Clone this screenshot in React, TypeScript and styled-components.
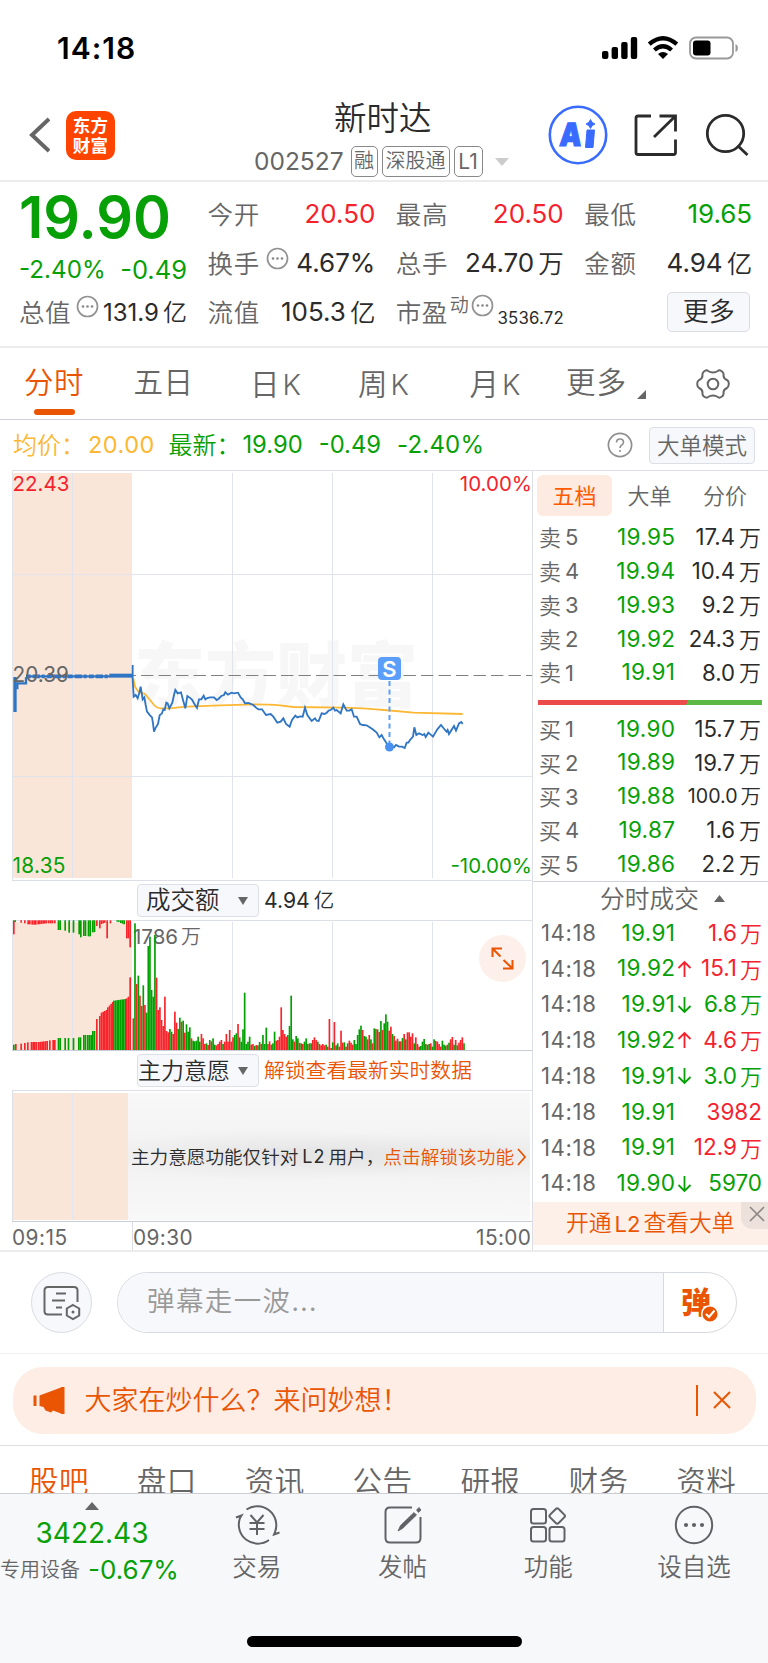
import React from 'react';
import styled, { createGlobalStyle } from 'styled-components';

const RED = '#f5222d';
const GREEN = '#07a007';
const ORANGE = '#ea5504';
const GREY = '#666';
const INK = '#2b2b2b';
const LINE = '#dcdfe6';

const Global = createGlobalStyle`
  * { box-sizing: border-box; }
  html, body { margin: 0; background: #fff; }
  body {
    width: 768px; height: 1663px; overflow: hidden;
    font-family: Inter, "Noto Sans CJK SC", sans-serif;
    line-height: 1; color: ${INK};
  }
`;

const Screen = styled.div`
  width: 768px; height: 1663px; display: flex; flex-direction: column; overflow: hidden; background: #fff;
`;

/* Text primitives */
const Cn = styled.span<{ $size: number; $color?: string; $gap?: number; $weight?: number }>`
  display: inline-block;
  padding-bottom: 0.11em;
  font-family: "Noto Sans CJK SC", sans-serif;
  font-weight: ${p => p.$weight ?? 350};
  font-size: ${p => p.$size}px;
  line-height: 1;
  letter-spacing: ${p => p.$gap ?? 0}px;
  color: ${p => p.$color ?? GREY};
  white-space: nowrap;
`;
const Num = styled.span<{ $size: number; $color?: string; $gap?: number; $weight?: number }>`
  font-size: ${p => p.$size}px;
  line-height: 1;
  font-weight: ${p => p.$weight ?? 400};
  letter-spacing: ${p => p.$gap ?? 0}px;
  margin-right: ${p => -(p.$gap ?? 0)}px;
  color: ${p => p.$color ?? INK};
  white-space: nowrap;
`;
const AmountBox = styled.span<{ $space: number }>`
  display: inline-flex; align-items: center; gap: ${p => p.$space}px;
`;
function Amount({ value, size, color, gap = 0, unitSize, space = 4 }: { value: string; size: number; color?: string; gap?: number; unitSize?: number; space?: number }) {
  const unit = /[万亿]$/.test(value) ? value.slice(-1) : '';
  const number = unit ? value.slice(0, -1) : value;
  return (
    <AmountBox $space={space}>
      <Num $size={size} $color={color} $gap={gap}>{number}</Num>
      {unit && <Cn $size={unitSize ?? size - 1} $color={color ?? INK}>{unit}</Cn>}
    </AmountBox>
  );
}

/* Status bar */
const StatusBar = styled.div`
  height: 95px; padding: 0 29px 0 57px; display: flex; align-items: center; justify-content: space-between;
`;
const StatusIcons = styled.svg`display: block;`;

/* Header */
const Header = styled.header`
  height: 87px; border-bottom: 2px solid #ececee; padding: 0 18px 0 28px;
  display: grid; grid-template-columns: 226px 1fr 218px;
`;
const HeaderLeft = styled.div`display: flex; align-items: center; gap: 16px; padding-bottom: 5px;`;
const Logo = styled.div`
  width: 49px; height: 49px; border-radius: 10px; background: #ff4400; color: #fff;
  display: flex; flex-direction: column; align-items: center; justify-content: center; gap: 1px; padding-top: 1px;
`;
const TitleBlock = styled.div`display: flex; flex-direction: column; align-items: flex-start;`;
const TitleRow = styled.div`height: 46px; padding-left: 80px; display: flex; align-items: center;`;
const CodeRow = styled.div`height: 31px; margin-top: 5px; display: flex; align-items: center;`;
const Tag = styled.span<{ $w: number }>`
  width: ${p => p.$w}px; height: 31px; border: 1px solid #888; border-radius: 5px; margin-right: 4px; flex: none;
  display: inline-flex; align-items: center; justify-content: center;
`;
const HeaderRight = styled.div`display: flex; justify-content: flex-end; align-items: center; padding-bottom: 5px;`;

/* Quote */
const Quote = styled.section`
  height: 166px; padding: 7.5px 0 0 19px; border-bottom: 2px solid #ececee;
  display: grid; grid-template-columns: 168px repeat(3, 168px); column-gap: 20.4px;
`;
const QuoteCol = styled.div`display: flex; flex-direction: column;`;
const QuoteCell = styled.div<{ $h?: number }>`
  height: ${p => p.$h ?? 49}px; display: flex; align-items: center; justify-content: space-between;
`;
const LabelGroup = styled.span<{ $space?: number }>`display: inline-flex; align-items: center; gap: ${p => p.$space ?? 6}px;`;
const Raised = styled.span<{ $up: number }>`display: inline-flex; margin-bottom: ${p => p.$up}px;`;
const MoreButton = styled.button`
  width: 83px; height: 40px; margin: 4px 2px 0 auto; padding: 0; border: 1px solid #d9dce3; border-radius: 5px; background: #f7f8fb;
  display: flex; align-items: center; justify-content: center;
`;

/* Period tabs */
const Tabs = styled.nav`
  height: 72px; border-bottom: 1px solid #cfd3d9; padding-bottom: 1px;
  display: grid; grid-template-columns: 108px 111px 113px 103px 120px 102px 1fr;
`;
const Tab = styled.div`
  display: flex; flex-direction: column; align-items: center; justify-content: flex-start; padding-top: 20px;
`;
const TabText = styled.span`display: inline-flex; align-items: flex-end; gap: 10px; height: 31px;`;
const LetterK = styled.span`display: inline-flex; padding-top: 1px;`;
const Underline = styled.i`width: 41px; height: 6px; border-radius: 3px; background: ${ORANGE}; margin: 10px 0 0 34px; align-self: flex-start;`;

/* Summary line */
const Summary = styled.div`
  height: 50px; padding: 0 13px 0 13px; display: flex; align-items: center; white-space: nowrap;
`;
const ModeButton = styled.button`
  width: 106px; height: 37px; border: 1px solid ${LINE}; border-radius: 4px; background: #f7f8fb; padding: 0;
  display: flex; align-items: center; justify-content: center; margin-left: 16px;
`;
const Spacer = styled.i<{ $w?: number }>`${p => (p.$w ? `width:${p.$w}px; flex: none;` : 'flex: 1;')}`;

/* Main board */
const Board = styled.section`
  height: 782px; display: grid; grid-template-columns: 521px 235px; padding-left: 12px; border-bottom: 2px solid #ececee;
`;
const Charts = styled.div`border-right: 1px solid ${LINE}; display: flex; flex-direction: column; border-top: 1px solid ${LINE};`;
const PricePane = styled.div`height: 410px; position: relative; border-bottom: 1px solid ${LINE};`;
const PaneSvg = styled.svg`display: block; overflow: visible;`;
const Overlay = styled(PaneSvg)`position: absolute; left: 0; top: 0;`;
const Corner = styled.span<{ $top: number; $right?: boolean; $left?: number }>`
  position: absolute; top: ${p => p.$top}px; ${p => (p.$right ? 'right: 0' : `left: ${p.$left ?? 0.5}px`)}; line-height: 1; display: flex;
`;
const Watermark = styled.span`
  position: absolute; left: 122px; top: 164px; line-height: 1; font-family: "Noto Sans CJK SC", sans-serif;
  font-weight: 900; font-size: 71px; color: #f7f7f7; white-space: nowrap;
`;
const Signal = styled.span`
  position: absolute; left: 366px; top: 186px; width: 23px; height: 23px; border-radius: 4px; background: #5b9ef9;
  display: flex; align-items: center; justify-content: center;
`;
const IndicatorRow = styled.div<{ $h: number }>`
  height: ${p => p.$h}px; padding-left: 125px; display: flex; align-items: center; gap: 5px; border-bottom: 1px solid ${LINE};
`;
const Dropdown = styled.div<{ $left: number }>`
  width: 122px; height: 33px; border: 1px solid ${LINE}; border-radius: 4px; background: #f7f8fb; padding: 0 10px 0 ${p => p.$left}px;
  display: flex; align-items: center; justify-content: space-between;
`;
const VolumePane = styled.div`height: 130px; border-bottom: 1px solid #c9ced6; position: relative;`;
const ExpandButton = styled.button`
  position: absolute; left: 467px; top: 14px; width: 47px; height: 47px; border: 0; padding: 0; border-radius: 50%; background: #fdf0ea;
  display: flex; align-items: center; justify-content: center;
`;
const WillPane = styled.div`height: 131px; border-bottom: 1px solid #c9ced6; padding-top: 2px; display: flex; border-left: 1px solid ${LINE};`;
const PreOpen = styled.div`
  width: 115px; height: 127px; background: #fae6d9; padding-left: 59px;
  &::before { content: ''; display: block; width: 1px; height: 100%; background: #e3e6ec; }
`;
const Locked = styled.div`
  width: 402px; height: 127px; display: flex; align-items: center; padding: 1px 0 0 3px; white-space: nowrap;
  background: radial-gradient(ellipse 190px 26px at 150px 62px, rgba(0,0,0,.06), rgba(0,0,0,0) 100%),
    radial-gradient(ellipse 190px 26px at 330px 62px, rgba(0,0,0,.04), rgba(0,0,0,0) 100%),
    linear-gradient(#f8f8f8, #f2f2f2 50%, #f8f8f8);
`;
const TightCn = styled(Cn)`margin-right: -6px;`;
const TimeAxis = styled.div`
  flex: 1; display: grid; grid-template-columns: 120px 1fr auto; align-items: stretch; padding-right: 1px;
  & > span { display: flex; align-items: center; padding-top: 4px; }
  & > span:nth-child(2) { border-left: 1px solid ${LINE}; }
`;

/* Order book */
const Side = styled.div`display: flex; flex-direction: column; border-top: 1px solid ${LINE};`;
const BookTabs = styled.div`
  height: 41px; margin: 4px 0 4.6px 4px; display: grid; grid-template-columns: 75px 75px 76px;
`;
const BookTab = styled.div<{ $on?: boolean }>`
  display: flex; align-items: center; justify-content: center; border-radius: 6px; background: ${p => (p.$on ? '#fdebe2' : 'transparent')};
`;
const BookRow = styled.div`
  height: 33.8px; flex: none; padding-left: 6px; display: grid; grid-template-columns: 136px 86px; align-items: center;
`;
const Pair = styled.span`display: flex; justify-content: space-between; align-items: center;`;
const RightCell = styled.span`display: flex; justify-content: flex-end; align-items: center;`;
const Ratio = styled.div`
  height: 5px; flex: none; margin: 10.4px 6px 7.1px 5px;
  background: linear-gradient(115deg, #eb4b4b 0 66.5%, #5cb946 66.5%);
`;
const TradesHead = styled.div`
  height: 34px; flex: none; border-top: 1px solid #cfd3d9; display: flex; align-items: center; justify-content: center; gap: 15px; padding-left: 24px;
`;
const TradeRow = styled.div`
  height: 35.8px; flex: none; padding-left: 8px; display: grid; grid-template-columns: 134px 17px 70px; align-items: center;
`;
const Promo = styled.div`
  height: 43px; flex: none; margin-top: 1px; background: #fdf0e9; display: flex; padding-left: 33px; align-items: center; justify-content: space-between;
`;
const PromoClose = styled.span`
  width: 27px; height: 27px; align-self: flex-start; border-bottom-left-radius: 11px; background: #ede2db; display: flex; align-items: center; justify-content: center;
  padding: 0 0 3px 4px;
`;

/* Comment bar */
const CommentBar = styled.div`
  height: 102px; padding: 0 31px; border-bottom: 1px solid #f0f0f2; display: flex; align-items: center; justify-content: space-between;
`;
const RoundButton = styled.button`
  width: 61px; height: 61px; border-radius: 50%; border: 1px solid #d9dce3; background: #f7f8fb; padding: 0; display: flex; align-items: center; justify-content: center;
`;
const InputPill = styled.div`
  width: 620px; height: 61px; border: 1px solid #d6d9df; border-radius: 31px; overflow: hidden; display: flex;
`;
const InputArea = styled.div`
  flex: 1; background: #f7f8fb; border-right: 1px solid #d6d9df; padding: 0 0 3px 29px; display: flex; align-items: center;
`;
const BulletToggle = styled.div`width: 72px; display: flex; align-items: center; padding-left: 18px;`;

/* Banner */
const BannerWrap = styled.div`height: 92px; padding: 12.5px 12.5px 0 12.5px; border-bottom: 1px solid #dcdee2;`;
const Banner = styled.div`
  height: 67.5px; border-radius: 30px; background: #fdede4; display: flex; align-items: center; padding: 0 25px 0 20px;
`;
const BannerRule = styled.i`width: 2px; height: 31px; background: ${ORANGE}; margin-right: 15px;`;

/* Lower tabs */
const LowerTabs = styled.nav`
  height: 47px; padding: 19px 0 0 5px; overflow: hidden; display: grid; grid-template-columns: repeat(7, 107.9px);
  & > span { text-align: center; }
`;

/* Bottom bar */
const BottomBar = styled.footer`
  flex: 1; background: #f7f8fa; border-top: 1px solid #ccd0d6; display: flex; flex-direction: column;
`;
const BottomRow = styled.div`height: 142px; display: grid; grid-template-columns: 184px repeat(4, 145.7px);`;
const IndexBlock = styled.div`display: flex; flex-direction: column; align-items: center; padding-top: 8px;`;
const IndexValue = styled.div`margin-top: 9px; display: flex;`;
const IndexLine = styled.div`display: flex; align-items: center; align-self: flex-start; padding-left: 0; gap: 8px; margin-top: 10px;`;
const NavItem = styled.div`display: flex; flex-direction: column; align-items: center; padding-top: 11px; gap: 9px;`;
const HomeBar = styled.i`width: 275px; height: 11px; border-radius: 6px; background: #000; margin-left: 247px;`;

function Dots({ r = 10 }: { r?: number }) {
  return (
    <svg width={23} height={23} viewBox="0 0 23 23" fill="none">
      <circle cx="11.5" cy="11.5" r={r} stroke="#929292" strokeWidth="1.7" />
      <circle cx="7" cy="11.5" r="1.3" fill="#888" /><circle cx="11.5" cy="11.5" r="1.3" fill="#888" /><circle cx="16" cy="11.5" r="1.3" fill="#888" />
    </svg>
  );
}
function Triangle({ w, h, up, color = GREY }: { w: number; h: number; up?: boolean; color?: string }) {
  return (
    <svg width={w} height={h} viewBox="0 0 10 10" preserveAspectRatio="none">
      <path d={up ? 'M5 0L10 10H0z' : 'M0 0H10L5 10z'} fill={color} />
    </svg>
  );
}
function Cross({ size, color, width }: { size: number; color: string; width: number }) {
  return (
    <svg width={size} height={size} viewBox={`0 0 ${size} ${size}`}>
      <path d={`M1 1L${size - 1} ${size - 1}M${size - 1} 1L1 ${size - 1}`} stroke={color} strokeWidth={width} />
    </svg>
  );
}

/* Series are sampled on a grid three times finer than a pixel. */
const PRICE_LINE =
  '398,75 398,118 401,170 407,165 413,175 418,158 422,140 428,178 433,172 437,195 441,215 450,226 456,232 459,250 462,275 466,265 474,252 479,226 486,220 490,208 494,210 499,188 503,190 508,205 517,188 522,165 526,150 533,160 543,157 549,180 556,205 562,168 572,175 577,180 582,190 591,204 597,178 604,178 611,167 616,178 622,174 630,172 642,172 650,180 656,176 664,168 672,165 676,157 684,164 694,158 702,160 714,158 722,172 728,178 735,190 745,189 760,195 768,203 775,208 786,208 798,225 812,222 820,230 832,248 842,245 850,235 858,252 869,260 876,240 886,227 892,232 900,229 908,230 915,203 922,225 935,243 945,235 950,242 956,243 965,220 974,222 980,218 986,212 992,210 1000,203 1005,212 1010,210 1022,220 1030,193 1040,212 1048,212 1055,208 1062,230 1070,230 1080,252 1088,255 1100,256 1118,268 1130,278 1138,292 1145,285 1152,298 1157,305 1163,316 1168,321 1174,318 1182,322 1188,315 1197,320 1206,320 1214,324 1220,308 1225,308 1230,300 1239,290 1243,262 1249,285 1257,280 1268,285 1273,282 1277,291 1285,278 1292,284 1299,290 1312,268 1323,255 1335,270 1340,275 1343,270 1347,282 1362,258 1368,272 1377,250 1384,246 1388,252';
const AVG_LINE =
  'M400 115L405 140L415 155L435 162L450 180L462 195Q470 204 482 205L510 205Q535 202 560 200L660 196L760 193Q810 193 840 196L880 201L1030 203Q1110 206 1152 210T1240 218L1388 222';

const VOLUME =
  'r355 g70 r252 g227 r287 r318 g256 r315 g338 g138 g110 g270 g290 g105 r233 r330 r322 r360 r378 r290 r393 r397 g387 g395 r402 r335 r368 g387 g353 r365 g362 r398 g373 g395 g382 r415 g422 g424 g422 g410 g425 r402 r415 r432 g430 r435 g420 r424 g415 g434 r436 r432 r425 r420 g432 r425 r402 r425 r390 r425 r412 g405 g400 r372 g412 g425 g388 g278 g432 g425 g410 r434 r432 g438 r435 g436 g426 r432 g405 g432 g383 r432 r424 r434 g430 g395 r422 r420 r410 r322 r390 r402 r410 g405 g378 g287 g418 r425 g408 g415 r428 g430 r432 g425 g415 r432 g430 g430 r420 r412 r420 g425 r432 r436 r432 r436 g434 r440 r357 r444 g427 r366 g436 g430 r440 r392 r428 g427 r440 g430 r422 r428 r434 g420 g432 g405 g388 g377 r390 g408 g410 r418 r405 g418 r430 g385 r387 g388 r396 g363 r390 g370 g343 g365 r392 r380 g402 r408 r422 r416 g424 r424 g414 r402 g418 r397 r397 r410 r400 g430 r412 r432 r440 g438 g425 g417 r432 g434 g432 r430 g440 g418 r423 r425 r432 r440 g422 g434 g437 r434 g428 r418 r411 g434 r420 g436 r428 r420 r412 g430'.split(' ');

type Run = [string, number, number, number, number, number];
/* colour, first x, last x, step, value at first, value at last */
const AUCTION_BASE: Run[] = [
  ['g', 40, 40, 5, 434, 434], ['r', 46, 46, 5, 432, 432], ['r', 62, 62, 5, 431, 431], ['r', 73, 73, 5, 429, 429], ['r', 82, 86, 5, 427, 427],
  ['r', 93, 108, 5, 426, 426], ['r', 115, 140, 5, 426, 423], ['r', 148, 152, 5, 421, 421], ['r', 158, 165, 5, 420, 420],
  ['g', 174, 180, 5, 414, 414], ['g', 194, 194, 5, 414, 414], ['g', 204, 208, 5, 414, 414], ['g', 219, 219, 5, 414, 414], ['g', 235, 240, 5, 412, 412],
  ['g', 250, 257, 5, 405, 405], ['g', 262, 272, 5, 405, 405], ['g', 277, 282, 5, 393, 393], ['r', 289, 289, 5, 357, 357], ['r', 298, 298, 5, 348, 348],
  ['r', 303, 318, 5, 338, 330], ['r', 322, 337, 5, 322, 306], ['g', 340, 375, 5, 302, 297], ['r', 379, 384, 5, 295, 290], ['r', 389, 389, 5, 232, 232],
];
const AUCTION_TOP: Run[] = [
  ['r', 40, 40, 5, 103, 103], ['g', 44, 44, 5, 66, 66], ['r', 62, 62, 5, 68, 68], ['r', 73, 73, 5, 70, 70], ['r', 83, 88, 5, 73, 73], ['r', 95, 95, 5, 74, 74],
  ['r', 101, 106, 5, 74, 74], ['r', 113, 138, 5, 73, 70], ['r', 145, 145, 5, 70, 70], ['r', 151, 156, 5, 70, 70], ['r', 163, 165, 5, 70, 70],
  ['g', 174, 181, 5, 90, 90], ['g', 194, 196, 5, 92, 92], ['g', 206, 208, 5, 98, 98], ['g', 219, 219, 5, 98, 98], ['g', 236, 241, 5, 103, 112],
  ['g', 250, 257, 5, 108, 108], ['g', 264, 272, 5, 109, 109], ['g', 277, 284, 5, 97, 96], ['r', 289, 289, 5, 78, 78], ['r', 298, 298, 5, 85, 85],
  ['r', 303, 314, 5, 72, 68], ['r', 320, 320, 5, 115, 115], ['r', 330, 330, 5, 70, 70], ['g', 350, 356, 5, 65, 66], ['g', 361, 374, 5, 69, 74],
  ['r', 379, 384, 5, 115, 115], ['r', 389, 389, 5, 142, 142],
];
function expand(runs: Run[]) {
  const out: { c: string; x: number; v: number }[] = [];
  runs.forEach(([c, a, b, step, v0, v1]) => {
    for (let x = a; x <= b; x += step) out.push({ c, x, v: b === a ? v0 : v0 + ((v1 - v0) * (x - a)) / (b - a) });
  });
  return out;
}
const ink = (c: string) => (c === 'r' ? '#f9232a' : '#00a000');

function PriceChart() {
  return (
    <PricePane>
      <PaneSvg width={520} height={409} viewBox="0 0 520 409">
        <rect x="0" y="2" width="120" height="405" fill="#fae6d9" />
      </PaneSvg>
      <Watermark>东方财富</Watermark>
      <Overlay width={520} height={409} viewBox="0 0 520 409">
        <g stroke="#e1e4eb" strokeWidth="1">
          <path d="M0.5 0V409M60.5 2V407M220.5 2V407M320.5 2V407M420.5 2V407M0 103.5H520M0 305.5H520" fill="none" />
        </g>
        <path d="M121 204.5H520" stroke="#808080" strokeWidth="1.2" strokeDasharray="12.4 5.1" strokeDashoffset="-8" />
        <g transform="translate(-12 169) scale(0.33333)" fill="none">
          <path d="M45 216V111" stroke="#2f75c4" strokeWidth="10" />
          <path d="M52 148V130H78V112" stroke="#2f75c4" strokeWidth="7" />
          <path d="M78 109H330" stroke="#2f75c4" strokeWidth="7" />
          <path d="M78 109H330" stroke="#2f75c4" strokeWidth="11" strokeDasharray="14 6 22 5 9 7" />
          <path d="M328 107H396" stroke="#2f75c4" strokeWidth="12" />
          <path d={AVG_LINE} stroke="#fcb834" strokeWidth="5.5" />
          <polyline points={PRICE_LINE} stroke="#2f75c4" strokeWidth="5.5" />
        </g>
        <path d="M377.5 210V276" stroke="#5b9ef9" strokeWidth="2" strokeDasharray="5 3.5" />
        <circle cx="377.5" cy="276" r="4.5" fill="#4a90f0" />
      </Overlay>
      <Corner $top={3}><Num $size={20.5} $color={RED}>22.43</Num></Corner>
      <Corner $top={3} $right><Num $size={20.5} $color={RED}>10.00%</Num></Corner>
      <Corner $top={194}><Num $size={20.8} $color={GREY}>20.39</Num></Corner>
      <Corner $top={385}><Num $size={20.8} $gap={0.3} $color={GREEN}>18.35</Num></Corner>
      <Corner $top={385} $right><Num $size={20.5} $color={GREEN}>-10.00%</Num></Corner>
      <Signal><Num $size={22} $weight={600} $color="#fff">S</Num></Signal>
    </PricePane>
  );
}

function VolumeChart() {
  return (
    <VolumePane>
      <PaneSvg width={520} height={129} viewBox="0 1 520 129">
        <rect x="0" y="2" width="120" height="128" fill="#fae6d9" />
        <path d="M0.5 0V130M60.5 2V130M220.5 2V130M320.5 2V130M420.5 2V130" stroke="#e1e4eb" fill="none" />
      </PaneSvg>
      <Corner $top={5} $left={121}><Amount value="1786万" size={20.5} color={GREY} unitSize={20} space={3} /></Corner>
      <Overlay width={520} height={129} viewBox="0 1 520 129">
        <g transform="translate(-12 -20) scale(0.33333)">
          {expand(AUCTION_TOP).map((b, i) => <rect key={i} x={b.x - 1} y={61} width={5} height={b.v - 61} fill={ink(b.c)} />)}
          {expand(AUCTION_BASE).map((b, i) => <rect key={i} x={b.x - 1} y={b.v} width={5} height={450 - b.v} fill={ink(b.c)} />)}
          {VOLUME.map((b, i) => {
            const top = Number(b.slice(1));
            return <rect key={i} x={397.500 + i * 4.985} y={top} width={5} height={450 - top} fill={ink(b[0])} />;
          })}
        </g>
      </Overlay>
      <ExpandButton aria-label="expand">
        <svg width="25" height="25" viewBox="0 0 25 25" fill="none" stroke={ORANGE} strokeWidth="2">
          <path d="M2.5 11V2.5H12M3 3L10.5 10.5M13.5 14L22 22M22.5 14V22.5H13" />
        </svg>
      </ExpandButton>
    </VolumePane>
  );
}

const sells = [['5', '19.95', '17.4万'], ['4', '19.94', '10.4万'], ['3', '19.93', '9.2万'], ['2', '19.92', '24.3万'], ['1', '19.91', '8.0万']];
const buys = [['1', '19.90', '15.7万'], ['2', '19.89', '19.7万'], ['3', '19.88', '100.0万'], ['4', '19.87', '1.6万'], ['5', '19.86', '2.2万']];
const trades: [string, '' | 'u' | 'd', string, string][] = [
  ['19.91', '', '1.6万', RED], ['19.92', 'u', '15.1万', RED], ['19.91', 'd', '6.8万', GREEN], ['19.92', 'u', '4.6万', RED],
  ['19.91', 'd', '3.0万', GREEN], ['19.91', '', '3982', RED], ['19.91', '', '12.9万', RED], ['19.90', 'd', '5970', GREEN],
];

function Level({ side, row }: { side: string; row: string[] }) {
  const long = row[2].length > 5;
  return (
    <BookRow>
      <Pair>
        <LabelGroup $space={4}><Cn $size={22}>{side}</Cn><Num $size={22} $color={GREY}>{row[0]}</Num></LabelGroup>
        <Num $size={22.6} $color={GREEN} $gap={0.3}>{row[1]}</Num>
      </Pair>
      <RightCell><Amount value={row[2]} size={long ? 19.6 : 22.2} unitSize={long ? 20.5 : 22} space={long ? 3 : 4} /></RightCell>
    </BookRow>
  );
}
function Arrow({ dir }: { dir: 'u' | 'd' }) {
  return (
    <svg width="15" height="18" viewBox="0 0 15 18" fill="none" stroke={dir === 'u' ? RED : GREEN} strokeWidth="1.8">
      <path d={dir === 'u' ? 'M7.5 17V2M1.5 8L7.5 2L13.5 8' : 'M7.5 1V16M1.5 10L7.5 16L13.5 10'} />
    </svg>
  );
}

const navStroke = { fill: 'none', stroke: '#606266', strokeWidth: 2 } as const;

export default function App() {
  return (
    <Screen>
      <Global />
      <StatusBar>
        <Num $size={30} $weight={600} $gap={1} $color="#000">14:18</Num>
        <StatusIcons width="137" height="24" viewBox="0 0 137 24">
          <rect x="0" y="15" width="6.4" height="8" rx="2" /><rect x="9.6" y="11" width="6.4" height="12" rx="2" />
          <rect x="19.2" y="6" width="6.4" height="17" rx="2" /><rect x="28.8" y="1" width="6.4" height="22" rx="2" />
          <g fill="none" stroke="#000" strokeWidth="4.2">
            <path d="M47.2 8.2Q61 -3.8 74.8 8.2" /><path d="M52.4 14Q61 6.4 69.6 14" />
          </g>
          <path d="M56 18Q61 14 66 18L61 23z" />
          <rect x="88" y="1.5" width="43" height="21" rx="6" fill="none" stroke="#999" strokeWidth="1.8" />
          <rect x="91" y="4.5" width="17.5" height="15" rx="3" />
          <path d="M133.5 8Q136 9 136 12T133.5 16z" fill="#999" />
        </StatusIcons>
      </StatusBar>

      <Header>
        <HeaderLeft>
          <svg width="22" height="36" viewBox="0 0 22 36" fill="none" stroke="#666" strokeWidth="4"><path d="M21 2L4 18L21 34" /></svg>
          <Logo>
            <Cn $size={17.5} $weight={700} $color="#fff" $gap={0.3}>东方</Cn>
            <Cn $size={17.5} $weight={700} $color="#fff" $gap={0.3}>财富</Cn>
          </Logo>
        </HeaderLeft>
        <TitleBlock>
          <TitleRow><Cn $size={32.5} $color={INK}>新时达</Cn></TitleRow>
          <CodeRow>
            <Num $size={24.5} $color={GREY}>002527</Num><Spacer $w={7} />
            <Tag $w={27}><Cn $size={20}>融</Cn></Tag>
            <Tag $w={68}><Cn $size={20}>深股通</Cn></Tag>
            <Tag $w={29}><Num $size={21} $color={GREY}>L1</Num></Tag>
            <Spacer $w={8} /><Triangle w={14} h={8} color="#ccc" />
          </CodeRow>
        </TitleBlock>
        <HeaderRight>
          <svg width="60" height="60" viewBox="0 0 60 60">
            <circle cx="30" cy="30" r="28.2" fill="#fff" stroke="#3a6bff" strokeWidth="2.6" />
            <text x="11" y="41.5" fontFamily="Inter" fontWeight="900" fontSize="32" fill="#3a6bff" stroke="#3a6bff" strokeWidth="1.2" transform="skewX(-4) translate(3 0)" textLength="22" lengthAdjust="spacingAndGlyphs">A</text>
            <path d="M39 25H46.500L45 42.500H37.500z" fill="#3a6bff" stroke="#3a6bff" strokeLinejoin="round" />
            <path d="M42.500 14.500Q43.500 18 47 19Q43.500 20 42.500 23.500Q41.500 20 38 19Q41.500 18 42.500 14.500z" fill="#3a6bff" stroke="#3a6bff" />
          </svg>
          <Spacer $w={26} />
          <svg width="44" height="44" viewBox="0 0 44 44" fill="none" stroke={INK} strokeWidth="2.8">
            <path d="M17.500 3.500H4.500Q2.500 3.500 2.500 5.500V40Q2.500 42 4.500 42H40Q42 42 42 40V27M26 3.500H42V19M42 3.500L20.500 24.500" transform="translate(-0.500 -0.500)" />
          </svg>
          <Spacer $w={27} />
          <svg width="45" height="44" viewBox="0 0 45 44" fill="none" stroke={INK} strokeWidth="2.8">
            <circle cx="20.500" cy="20.500" r="18.200" /><path d="M32.500 32.500L42.500 42" />
          </svg>
        </HeaderRight>
      </Header>

      <Quote>
        <QuoteCol>
          <QuoteCell $h={56}><Num $size={57.500} $weight={600} $color={GREEN}>19.90</Num></QuoteCell>
          <QuoteCell $h={49}><Num $size={24.200} $color={GREEN}>-2.40%</Num><Num $size={25.500} $color={GREEN}>-0.49</Num></QuoteCell>
          <QuoteCell $h={36}>
            <LabelGroup $space={5}><Cn $size={25.500} $gap={0.500}>总值</Cn><Raised $up={12}><Dots /></Raised></LabelGroup>
            <Amount value="131.9亿" size={24} unitSize={24} space={4} />
          </QuoteCell>
        </QuoteCol>
        <QuoteCol>
          <QuoteCell><Cn $size={25.500} $gap={0.800}>今开</Cn><Num $size={26} $color={RED}>20.50</Num></QuoteCell>
          <QuoteCell>
            <LabelGroup><Cn $size={25.500} $gap={0.800}>换手</Cn><Raised $up={10}><Dots /></Raised></LabelGroup>
            <Num $size={26}>4.67%</Num>
          </QuoteCell>
          <QuoteCell><Cn $size={25.500} $gap={0.800}>流值</Cn><Amount value="105.3亿" size={26} unitSize={25.500} /></QuoteCell>
        </QuoteCol>
        <QuoteCol>
          <QuoteCell><Cn $size={25.500} $gap={0.800}>最高</Cn><Num $size={26} $color={RED}>20.50</Num></QuoteCell>
          <QuoteCell><Cn $size={25.500} $gap={0.800}>总手</Cn><Amount value="24.70万" size={26} unitSize={25.500} /></QuoteCell>
          <QuoteCell>
            <LabelGroup $space={2}><Cn $size={25.500} $gap={0.500}>市盈</Cn><Raised $up={15}><Cn $size={19}>动</Cn></Raised><Raised $up={12}><Dots /></Raised></LabelGroup>
            <Raised $up={-12}><Num $size={16.800} $gap={0.200}>3536.72</Num></Raised>
          </QuoteCell>
        </QuoteCol>
        <QuoteCol>
          <QuoteCell><Cn $size={25.500} $gap={0.800}>最低</Cn><Num $size={26} $color={GREEN}>19.65</Num></QuoteCell>
          <QuoteCell><Cn $size={25.500} $gap={0.800}>金额</Cn><Amount value="4.94亿" size={26} unitSize={25.500} /></QuoteCell>
          <MoreButton><Cn $size={26} $color={INK}>更多</Cn></MoreButton>
        </QuoteCol>
      </Quote>

      <Tabs>
        <Tab><TabText><Cn $size={29.500} $color={ORANGE} $gap={0.500}>分时</Cn></TabText><Underline /></Tab>
        <Tab><TabText><Cn $size={29.500} $gap={0.500}>五日</Cn></TabText></Tab>
        {['日', '周', '月'].map(t => (
          <Tab key={t}><LabelGroup $space={3}><Cn $size={29.500}>{t}</Cn><LetterK><Num $size={28.500} $weight={350} $color={GREY}>K</Num></LetterK></LabelGroup></Tab>
        ))}
        <Tab><TabText><Cn $size={29.500} $gap={1}>更多</Cn><svg width="9" height="9" viewBox="0 0 9 9"><path d="M9 0V9H0z" fill={GREY} /></svg></TabText></Tab>
        <Tab>
          <svg width="34" height="32" viewBox="0 0 34 32" fill="none" stroke={GREY} strokeWidth="2">
            <path d="M12 3Q17 6 22 3Q23 1.500 26 3.500Q28 5 27.500 7.500Q27.500 10.500 31 12Q33 13 32.800 16T31 20Q27.500 21.500 27.500 24.500Q28 27 26 28.500Q23 30.500 22 29Q17 26 12 29Q11 30.500 8 28.500Q6 27 6.500 24.500Q6.500 21.500 3 20Q1.200 19 1.200 16T3 12Q6.500 10.500 6.500 7.500Q6 5 8 3.500Q11 1.500 12 3z" />
            <circle cx="17" cy="16" r="5.300" />
          </svg>
        </Tab>
      </Tabs>

      <Summary>
        <Cn $size={24} $color="#fcb834">均价：</Cn><Spacer $w={3} /><Num $size={23.500} $gap={0.500} $color="#fcb834">20.00</Num>
        <Spacer $w={14} /><Cn $size={24} $color={GREEN}>最新：</Cn><Spacer $w={2} /><Num $size={23.800} $color={GREEN}>19.90</Num>
        <Spacer $w={16} /><Num $size={23.800} $color={GREEN}>-0.49</Num><Spacer $w={16} /><Num $size={24} $gap={0.200} $color={GREEN}>-2.40%</Num>
        <Spacer />
        <svg width="26" height="26" viewBox="0 0 26 26" fill="none">
          <circle cx="13" cy="13" r="11.600" stroke="#8f8f8f" strokeWidth="1.700" />
          <path d="M9.500 10.500Q9.500 7 13 7T16.500 10.300Q16.500 12 14.500 13.200Q13 14 13 16" stroke="#8f8f8f" strokeWidth="1.600" /><circle cx="13" cy="19" r="1.100" fill="#8f8f8f" />
        </svg>
        <ModeButton><Cn $size={22.500}>大单模式</Cn></ModeButton>
      </Summary>

      <Board>
        <Charts>
          <PriceChart />
          <IndicatorRow $h={40}>
            <Dropdown $left={8}><Cn $size={24.500} $color={INK}>成交额</Cn><Triangle w={10} h={8} /></Dropdown>
            <Amount value="4.94亿" size={21.200} unitSize={20.500} space={4} />
          </IndicatorRow>
          <VolumeChart />
          <IndicatorRow $h={40}>
            <Dropdown $left={0}><Cn $size={23} $color={INK}>主力意愿</Cn><Triangle w={10} h={8} /></Dropdown>
            <Cn $size={20.800} $color={ORANGE}>解锁查看最新实时数据</Cn>
          </IndicatorRow>
          <WillPane>
            <PreOpen />
            <Locked>
              <Cn $size={18.600} $color={INK}>主力意愿功能仅针对</Cn><Spacer $w={4} /><Num $size={18} $gap={1}>L2</Num><Spacer $w={4} /><TightCn $size={18.600} $color={INK}>用户，</TightCn>
              <Spacer $w={5} /><Cn $size={18.700} $color={ORANGE}>点击解锁该功能</Cn><Spacer $w={3} />
              <svg width="9" height="18" viewBox="0 0 9 18" fill="none" stroke={ORANGE} strokeWidth="1.800"><path d="M1 1L8 9L1 17" /></svg>
            </Locked>
          </WillPane>
          <TimeAxis>
            <span><Num $size={20.800} $gap={0.500} $color={GREY}>09:15</Num></span>
            <span><Num $size={20.800} $gap={0.400} $color={GREY}>09:30</Num></span>
            <span><Num $size={20.800} $gap={0.400} $color={GREY}>15:00</Num></span>
          </TimeAxis>
        </Charts>
        <Side>
          <BookTabs>
            <BookTab $on><Cn $size={22} $color="#ff5a00" $weight={400}>五档</Cn></BookTab>
            <BookTab><Cn $size={22}>大单</Cn></BookTab>
            <BookTab><Cn $size={22}>分价</Cn></BookTab>
          </BookTabs>
          {sells.map(r => <Level key={r[0]} side="卖" row={r} />)}
          <Ratio />
          {buys.map(r => <Level key={r[0]} side="买" row={r} />)}
          <TradesHead><Cn $size={24.700}>分时成交</Cn><Triangle w={11} h={7} up /></TradesHead>
          {trades.map(([price, dir, amount, color], i) => (
            <TradeRow key={i}>
              <Pair><Num $size={22.200} $gap={0.600} $color={GREY}>14:18</Num><Num $size={22.600} $color={GREEN} $gap={0.300}>{price}</Num></Pair>
              <RightCell>{dir && <Arrow dir={dir} />}</RightCell>
              <RightCell><Amount value={amount} size={22.500} color={color} unitSize={22} space={3} /></RightCell>
            </TradeRow>
          ))}
          <Promo>
            <LabelGroup $space={3}><Cn $size={22.800} $color={ORANGE}>开通</Cn><Num $size={22} $color={ORANGE}>L2</Num><Cn $size={22.800} $color={ORANGE}>查看大单</Cn></LabelGroup>
            <PromoClose><Cross size={16} color="#8c8684" width={1.600} /></PromoClose>
          </Promo>
        </Side>
      </Board>

      <CommentBar>
        <RoundButton aria-label="settings">
          <svg width="40" height="38" viewBox="0 0 40 38" fill="none" stroke={GREY} strokeWidth="2">
            <path d="M20 30.500H6Q2.500 30.500 2.500 27V6.500Q2.500 3 6 3H32Q35.500 3 35.500 6.500V18M14 9.500H24M10 16.500H23M14 23.500H20" />
            <path d="M31 21L37.200 24.500V31.500L31 35L24.800 31.500V24.500z" /><circle cx="31" cy="28" r="1.500" fill={GREY} stroke="none" />
          </svg>
        </RoundButton>
        <InputPill>
          <InputArea><Cn $size={27.500} $color="#999" $gap={1.400}>弹幕走一波...</Cn></InputArea>
          <BulletToggle>
            <svg width="38" height="40" viewBox="0 0 38 40">
              <text x="-1" y="30" fontFamily="Noto Sans CJK SC" fontWeight="900" fontSize="30" fill={ORANGE}>弹</text>
              <circle cx="28" cy="31" r="8.300" fill={ORANGE} stroke="#fff" strokeWidth="1.500" />
              <path d="M24 31L27 34L32.500 27.500" fill="none" stroke="#fff" strokeWidth="2" />
            </svg>
          </BulletToggle>
        </InputPill>
      </CommentBar>

      <BannerWrap>
        <Banner>
          <svg width="32" height="28" viewBox="0 0 32 28" fill={ORANGE}>
            <path d="M0.500 9.500H3.500V20H0.500zM6.500 9.500L28 1.500V1H31.500V28H28V27.500L20 24.500L18 26.500L12.500 24.500L10.500 21L6.500 20z" />
          </svg>
          <Spacer $w={20} />
          <Cn $size={27} $color={ORANGE}>大家在炒什么？来问妙想！</Cn>
          <Spacer />
          <BannerRule />
          <Cross size={18} color={ORANGE} width={2} />
        </Banner>
      </BannerWrap>

      <LowerTabs>
        {['股吧', '盘口', '资讯', '公告', '研报', '财务', '资料'].map((t, i) => (
          <Cn key={t} $size={29.500} $gap={0.500} $color={i === 0 ? ORANGE : GREY}>{t}</Cn>
        ))}
      </LowerTabs>

      <BottomBar>
        <BottomRow>
          <IndexBlock>
            <Triangle w={14} h={8} up />
            <IndexValue><Num $size={28} $color={GREEN}>3422.43</Num></IndexValue>
            <IndexLine><Cn $size={20}>专用设备</Cn><Num $size={26} $color={GREEN}>-0.67%</Num></IndexLine>
          </IndexBlock>
          <NavItem>
            <svg width="44" height="40" viewBox="0 0 44 40" overflow="visible" {...navStroke}>
              <path d="M11.500 4.500A19 19 0 0 1 40 27L39 29.500L44.500 27.500M34 35A19 19 0 0 1 5 13L6.500 10.500L1 12.500" />
              <path d="M15.500 10L22 17.500L28.500 10M22 17.500V30M14.500 18H29.500M14.500 24H29.500" />
            </svg>
            <Cn $size={24.500}>交易</Cn>
          </NavItem>
          <NavItem>
            <svg width="40" height="40" viewBox="0 0 40 40" {...navStroke}>
              <path d="M29 2.500H7Q2.500 2.500 2.500 7V33Q2.500 37.500 7 37.500H33Q37.500 37.500 37.500 33V12" />
              <path d="M15 26L17.500 20.500L31 7.500L33.500 10L19.500 23.500zM33.500 5L36 2.500L38 5L35.500 7.500z" fill="#606266" stroke="#606266" strokeWidth="0.800" />
            </svg>
            <Cn $size={24.500}>发帖</Cn>
          </NavItem>
          <NavItem>
            <svg width="40" height="40" viewBox="0 0 40 40" {...navStroke}>
              <rect x="3" y="4" width="15" height="14.500" rx="2.500" /><rect x="3" y="22" width="15" height="14.500" rx="2.500" /><rect x="21.500" y="22" width="15" height="14.500" rx="2.500" />
              <rect x="23.200" y="5" width="12" height="12" rx="2" transform="rotate(45 29.200 11)" />
            </svg>
            <Cn $size={24.500}>功能</Cn>
          </NavItem>
          <NavItem>
            <svg width="40" height="40" viewBox="0 0 40 40" {...navStroke}>
              <circle cx="20" cy="20" r="18.200" />
              <g fill="#606266" stroke="none"><circle cx="12" cy="20" r="2.100" /><circle cx="20" cy="20" r="2.100" /><circle cx="28" cy="20" r="2.100" /></g>
            </svg>
            <Cn $size={24.500}>设自选</Cn>
          </NavItem>
        </BottomRow>
        <HomeBar />
      </BottomBar>
    </Screen>
  );
}
